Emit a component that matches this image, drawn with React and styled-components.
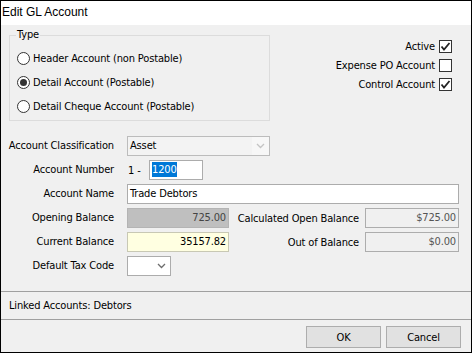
import styled, { createGlobalStyle } from "styled-components";

const GlobalStyle = createGlobalStyle`
  html, body {
    margin: 0;
    padding: 0;
    background: #fff;
  }
  * {
    box-sizing: border-box;
  }
`;

const Window = styled.div`
  width: 472px;
  height: 353px;
  border: 1px solid #000;
  display: flex;
  flex-direction: column;
  font-family: "DejaVu Sans Condensed", "DejaVu Sans", sans-serif;
  font-stretch: condensed;
  font-size: 11px;
  letter-spacing: -0.15px;
  color: #000;
  background: #f0f0f0;
`;

const TitleBar = styled.div`
  height: 24px;
  background: #fff;
  padding-left: 1px;
  font-family: "Liberation Sans", Arial, sans-serif;
  font-stretch: normal;
  letter-spacing: 0;
  font-size: 12px;
  line-height: 22px;
`;

const Body = styled.div`
  flex: 1;
  display: flex;
  flex-direction: column;
`;

const TopSection = styled.div`
  display: flex;
  padding: 3px 19px 0 8px;
`;

const GroupBox = styled.fieldset`
  width: 261px;
  margin: 0;
  padding: 4px 0 2px 6px;
  border: 1px solid #dcdcdc;
  min-width: 0;
`;

const Legend = styled.legend`
  padding: 0 1px;
  line-height: 14px;
`;

const RadioRow = styled.label`
  display: flex;
  align-items: center;
  height: 24px;
  gap: 3px;
  margin-left: 1px;
`;

const RadioDot = styled.span`
  width: 13px;
  height: 13px;
  border-radius: 50%;
  border: 1px solid #333;
  background: #fff;
  display: flex;
  align-items: center;
  justify-content: center;
  &::after {
    content: "";
    width: 7px;
    height: 7px;
    border-radius: 50%;
    background: ${({ checked }) => (checked ? "#333" : "transparent")};
  }
`;

const CheckColumn = styled.div`
  margin-left: auto;
  padding-top: 12px;
  display: flex;
  flex-direction: column;
  align-items: flex-end;
  gap: 6px;
`;

const CheckRow = styled.label`
  display: flex;
  align-items: center;
  height: 13px;
  gap: 4px;
`;

const CheckBox = styled.span`
  width: 13px;
  height: 13px;
  border: 1px solid #333;
  background: #fff;
  display: flex;
  align-items: center;
  justify-content: center;
`;

const Form = styled.div`
  margin-top: 15px;
  display: grid;
  grid-template-columns: 113px 1fr;
  column-gap: 13px;
  row-gap: 4px;
  padding-right: 12px;
`;

const Label = styled.div`
  height: 20px;
  line-height: 20px;
  text-align: right;
  white-space: nowrap;
`;

const Field = styled.div`
  display: flex;
  align-items: center;
  height: 20px;
`;

const Input = styled.div`
  width: ${({ w }) => w}px;
  height: 20px;
  border: 1px solid ${({ border }) => border || "#acacac"};
  background: ${({ bg }) => bg || "#fff"};
  color: ${({ fg }) => fg || "#000"};
  padding: 0 2px;
  line-height: 18px;
  text-align: ${({ right }) => (right ? "right" : "left")};
  white-space: nowrap;
  overflow: hidden;
`;

const Selected = styled.span`
  background: #0078d7;
  color: #fff;
  padding: 1px 0;
`;

const Combo = styled.div`
  width: ${({ w }) => w}px;
  height: 20px;
  display: flex;
  border: 1px solid ${({ disabled }) => (disabled ? "#bcbcbc" : "#acacac")};
  background: ${({ disabled }) => (disabled ? "#f3f3f3" : "#fff")};
  line-height: 18px;
`;

const ComboText = styled.div`
  flex: 1;
  padding-left: 2px;
`;

const ComboArrow = styled.div`
  width: 17px;
  display: flex;
  align-items: center;
  justify-content: center;
  background: ${({ disabled }) => (disabled ? "#f7f7f7" : "transparent")};
`;

const Prefix = styled.span`
  width: 22px;
  padding-left: 1px;
`;

const SideLabel = styled.div`
  flex: 1;
  text-align: right;
  margin-right: 6px;
  white-space: nowrap;
`;

const Separator = styled.div`
  height: 1px;
  background: #a0a0a0;
`;

const LinkedBar = styled.div`
  height: 27px;
  line-height: 27px;
  padding-left: 8px;
`;

const ButtonBar = styled.div`
  height: 32px;
  display: flex;
  justify-content: flex-end;
  gap: 5px;
  padding: 6px 10px 0 0;
`;

const Button = styled.button`
  width: 75px;
  height: 22px;
  border: 1px solid #adadad;
  background: #e1e1e1;
  font-family: inherit;
  font-stretch: inherit;
  letter-spacing: inherit;
  font-size: 11px;
  color: #000;
  padding: 0;
`;

const Chevron = ({ color }) => (
  <svg width="9" height="6" viewBox="0 0 9 6">
    <polyline points="1,1 4.5,4.5 8,1" fill="none" stroke={color} strokeWidth="1.3" />
  </svg>
);

const Tick = () => (
  <svg width="11" height="11" viewBox="0 0 11 11">
    <polyline points="1.5,5.5 4,8.5 9.5,2" fill="none" stroke="#222" strokeWidth="1.8" />
  </svg>
);

const radios = [
  { label: "Header Account (non Postable)", checked: false },
  { label: "Detail Account (Postable)", checked: true },
  { label: "Detail Cheque Account (Postable)", checked: false },
];

const checks = [
  { label: "Active", checked: true },
  { label: "Expense PO Account", checked: false },
  { label: "Control Account", checked: true },
];

const App = () => {
  return (
    <>
      <GlobalStyle />
      <Window>
        <TitleBar>Edit GL Account</TitleBar>
        <Body>
          <TopSection>
            <GroupBox>
              <Legend>Type</Legend>
              {radios.map(r => (
                <RadioRow key={r.label}>
                  <RadioDot checked={r.checked} />
                  {r.label}
                </RadioRow>
              ))}
            </GroupBox>
            <CheckColumn>
              {checks.map(c => (
                <CheckRow key={c.label}>
                  {c.label}
                  <CheckBox>{c.checked && <Tick />}</CheckBox>
                </CheckRow>
              ))}
            </CheckColumn>
          </TopSection>

          <Form>
            <Label>Account Classification</Label>
            <Field>
              <Combo w={143} disabled>
                <ComboText>Asset</ComboText>
                <ComboArrow disabled>
                  <Chevron color="#c4c4c4" />
                </ComboArrow>
              </Combo>
            </Field>

            <Label>Account Number</Label>
            <Field>
              <Prefix>1 -</Prefix>
              <Input w={54}>
                <Selected>1200</Selected>
              </Input>
            </Field>

            <Label>Account Name</Label>
            <Field>
              <Input w={332}>Trade Debtors</Input>
            </Field>

            <Label>Opening Balance</Label>
            <Field>
              <Input w={102} bg="#bfbfbf" border="#b4b4b4" fg="#444" right>
                725.00
              </Input>
              <SideLabel>Calculated Open Balance</SideLabel>
              <Input w={94} bg="#f0f0f0" border="#adadad" fg="#555" right>
                $725.00
              </Input>
            </Field>

            <Label>Current Balance</Label>
            <Field>
              <Input w={102} bg="#ffffe1" border="#c8c8b4" right>
                35157.82
              </Input>
              <SideLabel>Out of Balance</SideLabel>
              <Input w={94} bg="#f0f0f0" border="#adadad" fg="#555" right>
                $0.00
              </Input>
            </Field>

            <Label>Default Tax Code</Label>
            <Field>
              <Combo w={44}>
                <ComboText />
                <ComboArrow>
                  <Chevron color="#6d6d6d" />
                </ComboArrow>
              </Combo>
            </Field>
          </Form>
        </Body>
        <Separator />
        <LinkedBar>Linked Accounts: Debtors</LinkedBar>
        <Separator />
        <ButtonBar>
          <Button>OK</Button>
          <Button>Cancel</Button>
        </ButtonBar>
      </Window>
    </>
  );
};

export default App;
